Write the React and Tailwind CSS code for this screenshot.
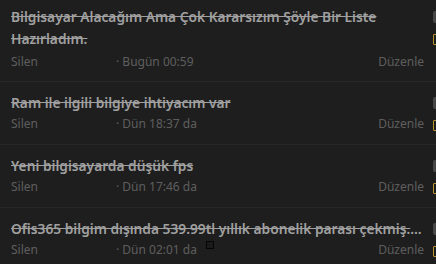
import React from "react";

const rows = [
  { title: "Bilgisayar Alacağım Ama Çok Kararsızım Şöyle Bir Liste Hazırladım.", time: "· Bugün 00:59", first: true },
  { title: "Ram ile ilgili bilgiye ihtiyacım var", time: "· Dün 18:37 da" },
  { title: "Yeni bilgisayarda düşük fps", time: "· Dün 17:46 da" },
  { title: "Ofis365 bilgim dışında 539.99tl yıllık abonelik parası çekmiş. Geri alabilir miyim?", time: "· Dün 02:01 da", truncate: true, square: true },
];

export default function App() {
  return (
    <div className="w-[436px] h-[264px] overflow-hidden bg-[#1e1e1e]" style={{ fontFamily: '"Noto Sans", sans-serif' }}>
      <div className="w-[460px]">
        {rows.map((r, i) => (
          <div
            key={i}
            className={`flex border-b border-[#272727] pb-[10px] ${r.first ? "pt-[6px]" : "pt-[10px]"}`}
          >
            <div className="w-[424px] pl-[11px] min-w-0">
              <div
                className={`text-[13.75px] leading-[22px] font-semibold text-[#a0a0a0] line-through pr-[1px] ${r.truncate ? "truncate" : ""}`}
              >
                {r.title}
              </div>
              <div className={`flex items-center text-[12px] leading-[18px] text-[#5e5e5e] ${r.first ? "mt-[3px]" : "mt-[1px]"}`}>
                <span className="w-[105px] shrink-0">Silen</span>
                <span>{r.time}</span>
                {r.square && (
                  <span className="ml-[9px] -mt-[11px] w-[8px] h-[8px] border border-[#050505] bg-[#1a1a1a]" />
                )}
                <span className="ml-auto">Düzenle</span>
              </div>
            </div>
            <div className="w-[36px] pl-[9px] flex flex-col">
              <div className="h-[22px] flex items-center">
                <span className="w-[10px] h-[12px] bg-[#484848] rounded-[2px]" />
              </div>
              <div className="h-[18px] mt-[2px] flex items-center">
                <span className="w-[12px] h-[11px] border border-[#b8952c] rounded-[1px]" />
              </div>
            </div>
          </div>
        ))}
      </div>
    </div>
  );
}
